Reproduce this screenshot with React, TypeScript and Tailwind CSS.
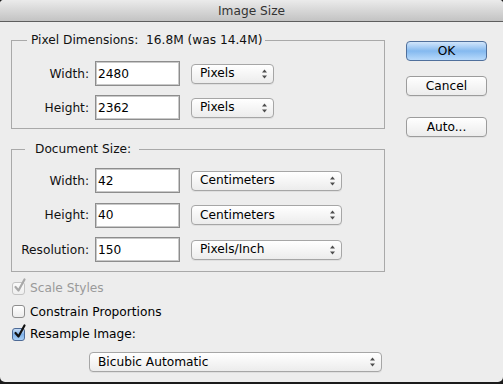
import React from "react";

const font = { fontFamily: '"DejaVu Sans", "Liberation Sans", sans-serif' };

function Arrows() {
  return (
    <svg width="7" height="10" viewBox="0 0 7 10" className="shrink-0">
      <path d="M3.5 0.5 L6 3.5 L1 3.5 Z" fill="#4d4d4d" />
      <path d="M3.5 9.5 L6 6.5 L1 6.5 Z" fill="#4d4d4d" />
    </svg>
  );
}

function Popup({ label, w }: { label: string; w: string }) {
  return (
    <div
      className={`${w} h-[20px] flex items-center justify-between pl-[8px] pr-[5px] rounded-[4px] border border-[#a6a6a6] bg-gradient-to-b from-[#ffffff] to-[#ececec] shadow-[0_1px_0_rgba(0,0,0,0.06)] text-black`}
    >
      <span className="leading-none">{label}</span>
      <Arrows />
    </div>
  );
}

function Field({ label, value, popup, pw }: { label: string; value: string; popup: string; pw: string }) {
  return (
    <div className="flex items-center h-[25px]">
      <div className="w-[78px] text-right pr-[1px] text-[#111]">{label}</div>
      <div className="ml-[5px] w-[85px] h-[25px] border border-[#8d8d8d] bg-white shadow-[inset_0_0_0_1px_#c9c9c9] flex items-center pl-[2px] text-black">
        {value}
      </div>
      <div className="ml-[11px]">
        <Popup label={popup} w={pw} />
      </div>
    </div>
  );
}

function Check({ state }: { state: "disabled" | "off" | "on" }) {
  if (state === "off") {
    return (
      <div className="w-[13px] h-[13px] rounded-[3px] border border-[#8e8e8e] bg-gradient-to-b from-[#ffffff] to-[#ececec]" />
    );
  }
  const on = state === "on";
  return (
    <div className="relative w-[13px] h-[13px]">
      <div
        className={
          on
            ? "w-[13px] h-[13px] rounded-[3px] border border-[#4d6a96] bg-gradient-to-b from-[#c6dcf5] via-[#7fb1e8] to-[#a9d0f7]"
            : "w-[13px] h-[13px] rounded-[3px] border border-[#c4c4c4] bg-gradient-to-b from-[#fafafa] to-[#efefef]"
        }
      />
      <svg width="14" height="15" viewBox="0 0 14 15" className="absolute left-[1px] top-[-4px]">
        <path
          d="M2.5 9 L5.5 12.5 L11.5 1.5"
          fill="none"
          stroke={on ? "#111" : "#a8a8a8"}
          strokeWidth="2.2"
          strokeLinecap="round"
          strokeLinejoin="round"
        />
      </svg>
    </div>
  );
}

function Btn({ label, primary }: { label: string; primary?: boolean }) {
  return (
    <div
      className={
        primary
          ? "w-[81px] h-[20px] rounded-[4px] border border-[#50709c] bg-gradient-to-b from-[#d2e6fb] via-[#84b9ef] to-[#b8dafb] flex items-center justify-center text-black"
          : "w-[81px] h-[20px] rounded-[4px] border border-[#9c9c9c] bg-gradient-to-b from-[#ffffff] to-[#ececec] shadow-[0_1px_0_rgba(0,0,0,0.05)] flex items-center justify-center text-black"
      }
    >
      {label}
    </div>
  );
}

export default function App() {
  return (
    <div className="w-[503px] h-[384px] bg-[#1b1b1b] overflow-hidden text-[12.2px] leading-[16px]" style={font}>
      <div className="h-[382px] bg-[#ededed] rounded-b-[5px] rounded-t-[4px] flex flex-col overflow-hidden">
        <div className="h-[22px] shrink-0 border-b border-[#5e5e5e] bg-gradient-to-b from-[#ebebeb] to-[#c3c3c3] flex items-center justify-center text-[#333] pt-[1px]">
          Image Size
        </div>
        <div className="flex flex-1">
          <div className="pl-[11px] w-[385px] shrink-0">
            <fieldset className="mt-[10px] border border-[#a9a9a9] pt-[13px] pb-[8px] flex flex-col gap-[9px]">
              <legend className="ml-[15px] pl-[4px] pr-[3px] text-[#111] whitespace-pre">Pixel Dimensions:  16.8M (was 14.4M)</legend>
              <Field label="Width:" value="2480" popup="Pixels" pw="w-[83px]" />
              <Field label="Height:" value="2362" popup="Pixels" pw="w-[83px]" />
            </fieldset>
            <fieldset className="mt-[12px] border border-[#a9a9a9] pt-[11px] pb-[9px] flex flex-col gap-[9.5px]">
              <legend className="ml-[13px] pl-[10px] pr-[8px] text-[#111]">Document Size:</legend>
              <Field label="Width:" value="42" popup="Centimeters" pw="w-[151px]" />
              <Field label="Height:" value="40" popup="Centimeters" pw="w-[151px]" />
              <Field label="Resolution:" value="150" popup="Pixels/Inch" pw="w-[151px]" />
            </fieldset>
            <div className="mt-[4px] flex flex-col">
              <div className="h-[24px] flex items-center pl-[1px] gap-[5px] text-[#9a9a9a]">
                <Check state="disabled" />
                <span>Scale Styles</span>
              </div>
              <div className="h-[23px] flex items-center pl-[1px] gap-[5px] text-black">
                <Check state="off" />
                <span>Constrain Proportions</span>
              </div>
              <div className="h-[22px] flex items-center pl-[1px] gap-[5px] text-black">
                <Check state="on" />
                <span>Resample Image:</span>
              </div>
              <div className="mt-[7px] pl-[78px]">
                <Popup label="Bicubic Automatic" w="w-[293px]" />
              </div>
            </div>
          </div>
          <div className="ml-[21px] pt-[19px] flex flex-col">
            <Btn label="OK" primary />
            <div className="mt-[15px]">
              <Btn label="Cancel" />
            </div>
            <div className="mt-[21px]">
              <Btn label="Auto..." />
            </div>
          </div>
        </div>
      </div>
    </div>
  );
}
